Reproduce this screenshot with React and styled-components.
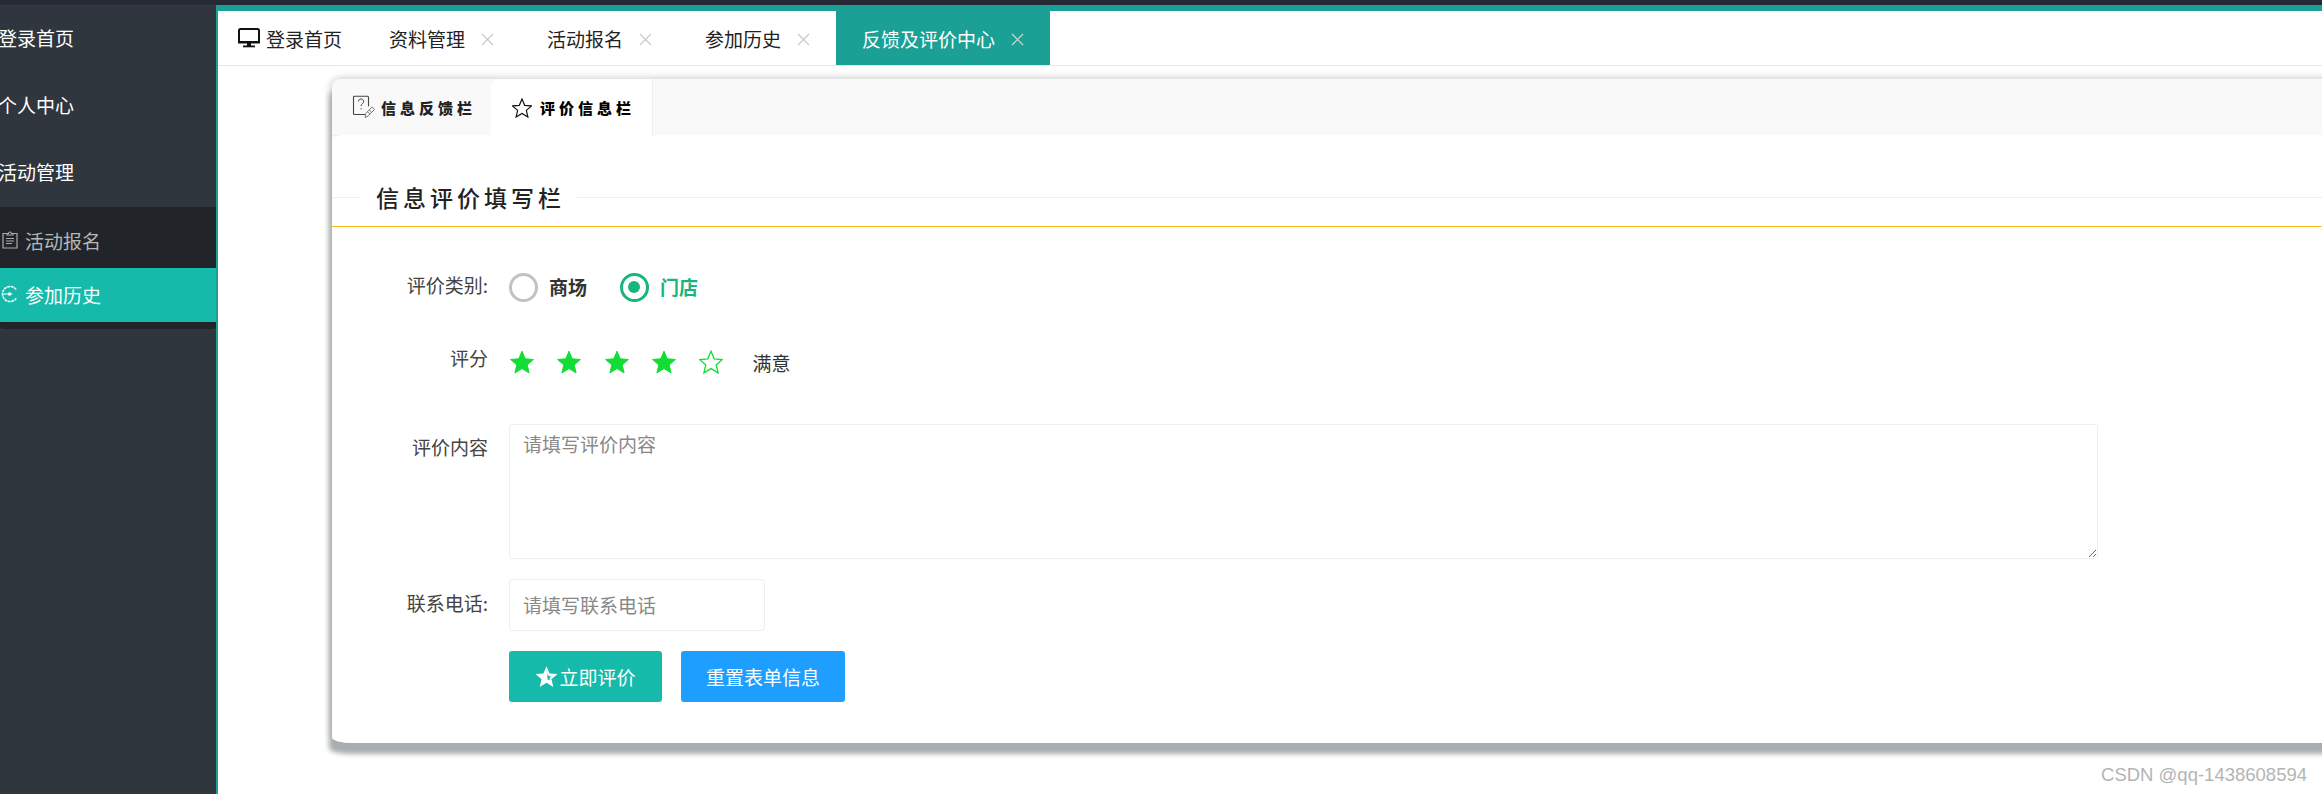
import React from "react";
import styled, { createGlobalStyle } from "styled-components";

const GlobalStyle = createGlobalStyle`
  html, body {
    margin: 0;
    padding: 0;
    height: 100%;
    overflow: hidden;
    background: #fff;
  }
  body {
    font-family: "Noto Sans CJK SC", "Liberation Sans", sans-serif;
    font-size: 19px;
    color: #333;
  }
  * {
    box-sizing: border-box;
  }
`;

const DesktopIcon = () => (
  <svg width="22" height="20" viewBox="0 0 22 20">
    <rect x="1" y="1" width="20" height="13" rx="1.5" fill="none" stroke="#111" strokeWidth="2" />
    <rect x="0" y="13" width="22" height="2.5" fill="#111" />
    <rect x="9" y="15" width="4" height="3" fill="#111" />
    <rect x="5" y="17.5" width="12" height="1.8" fill="#111" />
  </svg>
);

const ClipboardIcon = () => (
  <svg width="16" height="18" viewBox="0 0 16 18">
    <path d="M5 2.5H1v14.5h14V2.5h-4" fill="none" stroke="#a8abad" strokeWidth="1.2" />
    <path d="M5 4V2.5h1.5a1.5 1.5 0 0 1 3 0H11V4z" fill="none" stroke="#a8abad" strokeWidth="1.1" />
    <path d="M4 7.5h8M4 10h8M4 12.5h6" stroke="#a8abad" strokeWidth="1.1" />
  </svg>
);

const HistoryIcon = () => (
  <svg width="19" height="20" viewBox="0 0 19 20">
    <path d="M16 5.2A8 8 0 1 0 16 14.8" fill="none" stroke="#fff" strokeWidth="1.6" strokeDasharray="3 .7" />
    <circle cx="9" cy="10" r="1.8" fill="#fff" />
    <path d="M1.5 10H9M9 10h3" stroke="#fff" strokeWidth="1.2" />
  </svg>
);

const FeedbackIcon = () => (
  <svg width="23" height="24" viewBox="0 0 23 24">
    <path d="M13 19.5H2.5a1 1 0 0 1-1-1V2.2a1 1 0 0 1 1-1h13a1 1 0 0 1 1 1v9" fill="none" stroke="#444" strokeWidth="1.1" />
    <path d="M6.5 6.5a2.6 2.6 0 1 1 4 2.2c-.9.6-1.4 1.2-1.4 2.4M9.1 13.2v1.2" fill="none" stroke="#444" strokeWidth="1" />
    <path d="M13 22.5l.8-4 6.3-6.5 2.4 2.4-6.4 6.6zM15.3 16.6l2.6 2.5M17.2 14.8l2.4 2.4" fill="none" stroke="#777" strokeWidth="1" />
  </svg>
);

const StarShape = ({ size, fill, stroke, strokeWidth = 1 }) => (
  <svg width={size} height={size} viewBox="0 0 24 24">
    <path
      d="M12 1.2l3.2 7.6 8.2.7-6.2 5.4 1.9 8L12 18.6l-7.1 4.3 1.9-8L.6 9.5l8.2-.7z"
      fill={fill}
      stroke={stroke}
      strokeWidth={strokeWidth}
      strokeLinejoin="miter"
    />
  </svg>
);

const ButtonStar = () => (
  <svg width="23" height="23" viewBox="0 0 24 24">
    <path d="M12 1.2l3.2 7.6 8.2.7-6.2 5.4 1.9 8L12 18.6l-7.1 4.3 1.9-8L.6 9.5l8.2-.7z" fill="#fff" />
    <path d="M13 8.5l1.4 3 2.6.3-2 1.8.6 2.7-2.6-1.4z" fill="#16baaa" />
  </svg>
);

const openTabs = [
  { label: "资料管理" },
  { label: "活动报名" },
  { label: "参加历史" },
  { label: "反馈及评价中心", active: true },
];

const Page = styled.div`
  display: flex;
  flex-direction: column;
  height: 100vh;
  overflow: hidden;
`;

const TopStrip = styled.div`
  flex: none;
  height: 5px;
  background: #252a35;
`;

const Body = styled.div`
  flex: 1;
  display: flex;
  min-height: 0;
`;

const Sidebar = styled.aside`
  flex: none;
  width: 216px;
  background: #2f363e;
`;

const NavItem = styled.div`
  display: flex;
  align-items: center;
  height: 67px;
  padding-bottom: 2px;
  color: #fff;
  span {
    margin-left: -2px;
  }
`;

const SubMenu = styled.div`
  margin-top: 1px;
  padding: 7px 0;
  background: #212529;
  border-radius: 0 0 4px 4px;
`;

const SubItem = styled.div`
  display: flex;
  align-items: center;
  gap: 6px;
  height: 54px;
  padding-left: 1px;
  padding-bottom: 2px;
  color: ${({ $active }) => ($active ? "#fff" : "#b4b7b9")};
  background: ${({ $active }) => ($active ? "#16baaa" : "transparent")};
`;

const SubIcon = styled.span`
  display: flex;
  justify-content: center;
  width: 18px;
`;

const Main = styled.main`
  flex: 1;
  min-width: 0;
  display: flex;
  flex-direction: column;
  border-left: 2px solid #1aa094;
  border-top: 6px solid #1aa094;
`;

const TabBar = styled.div`
  flex: none;
  display: flex;
  height: 55px;
  border-bottom: 1px solid #e6e6e6;
`;

const HomeTab = styled.div`
  display: flex;
  align-items: center;
  gap: 6px;
  width: 145px;
  padding-left: 20px;
  color: #222;
`;

const Tab = styled.div`
  display: flex;
  align-items: center;
  gap: 16px;
  width: 158px;
  height: 54px;
  padding-left: 26px;
  color: ${({ $active }) => ($active ? "#fff" : "#222")};
  background: ${({ $active }) => ($active ? "#1aa094" : "transparent")};
  ${({ $active }) => $active && "width: 214px; margin-left: -1px;"}
`;

const CloseMark = styled.svg`
  width: 13px;
  height: 13px;
  margin-top: 3px;
  stroke: ${({ $active }) => ($active ? "#c9dcd9" : "#c9c9c9")};
`;

const Content = styled.div`
  flex: 1;
  min-height: 0;
  padding: 13px 0 0 114px;
`;

const Card = styled.section`
  margin-right: -40px;
  background: #f9f9f9;
  border-radius: 8px 8px 8px 20px / 8px 8px 8px 6px;
  box-shadow: -3px 11px 5px 0 #a9adaf, 0 0 8px rgba(0, 0, 0, 0.25);
`;

const CardTabs = styled.div`
  display: flex;
  height: 57px;
  border-bottom: 1px solid #eee;
`;

const CardTab = styled.div`
  display: flex;
  align-items: center;
  gap: ${({ $active }) => ($active ? "8px" : "6px")};
  height: ${({ $active }) => ($active ? "57px" : "56px")};
  width: ${({ $active }) => ($active ? "162px" : "159px")};
  padding-left: ${({ $active }) => ($active ? "21px" : "20px")};
  background: ${({ $active }) => ($active ? "#fff" : "transparent")};
  border-right: ${({ $active }) => ($active ? "1px solid #eee" : "none")};
  border-radius: 8px 0 0 0;
  font-size: 15px;
  font-weight: 900;
  letter-spacing: 4px;
  color: ${({ $active }) => ($active ? "#000" : "#222")};
`;

const CardBody = styled.div`
  padding: 40px 0 41px;
  background: #fff;
  border-radius: 10px 0 0 0;
  border-bottom-left-radius: 20px 6px;
  margin-top: -1px;
`;

const Legend = styled.div`
  display: flex;
  align-items: center;
  height: 44px;
`;

const LegendRule = styled.div`
  height: 1px;
  background: #eee;
  width: ${({ $short }) => ($short ? "28px" : "auto")};
  flex: ${({ $short }) => ($short ? "none" : "1")};
`;

const LegendTitle = styled.h2`
  margin: 0;
  padding: 0 12px 0 16px;
  font-size: 23px;
  font-weight: 500;
  letter-spacing: 4px;
  color: #222;
`;

const GoldRule = styled.div`
  height: 1px;
  margin-top: 7px;
  background: #f9bd1c;
`;

const Row = styled.div`
  display: flex;
  align-items: flex-start;
  gap: 21px;
  margin-top: ${({ $top }) => $top}px;
`;

const Label = styled.label`
  flex: none;
  width: 156px;
  margin-top: ${({ $shift }) => $shift}px;
  line-height: 28px;
  text-align: right;
  color: #444;
`;

const Choices = styled.div`
  display: flex;
  align-items: center;
  height: 28px;
`;

const Choice = styled.div`
  display: flex;
  align-items: center;
  gap: 11px;
  margin-right: 33px;
  font-weight: 700;
  line-height: 28px;
  color: ${({ $checked }) => ($checked ? "#1ab57f" : "#333")};
`;

const RadioMark = styled.span`
  position: relative;
  flex: none;
  width: 29px;
  height: 29px;
  border-radius: 50%;
  border: 3.5px solid ${({ $checked }) => ($checked ? "#16b777" : "#c2c2c2")};
  &::after {
    content: "";
    display: ${({ $checked }) => ($checked ? "block" : "none")};
    position: absolute;
    left: 5px;
    top: 5px;
    width: 12px;
    height: 12px;
    border-radius: 50%;
    background: #16b777;
  }
`;

const Stars = styled.div`
  display: flex;
  align-items: center;
  height: 24px;
  margin-left: 1px;
  gap: 23.3px;
`;

const RatingText = styled.span`
  margin-left: 6px;
  color: #333;
`;

const TextArea = styled.textarea`
  display: block;
  width: 1589px;
  height: 135px;
  padding: 5px 13px;
  border: 1px solid #eee;
  border-radius: 3px;
  outline: none;
  resize: vertical;
  font: inherit;
  line-height: 28px;
  color: #333;
  &::placeholder {
    color: #888;
  }
`;

const TextInput = styled.input`
  display: block;
  width: 256px;
  height: 52px;
  padding: 0 13px 2px;
  border: 1px solid #eee;
  border-radius: 3px;
  outline: none;
  font: inherit;
  &::placeholder {
    color: #888;
  }
`;

const Buttons = styled.div`
  display: flex;
  gap: 19px;
  margin-left: 177px;
  margin-top: 20px;
`;

const Button = styled.button`
  display: flex;
  align-items: center;
  justify-content: center;
  gap: 1px;
  width: ${({ $wide }) => ($wide ? "164px" : "153px")};
  height: 51px;
  padding: 0;
  border: none;
  border-radius: 3px;
  font: inherit;
  color: #fff;
  background: ${({ $blue }) => ($blue ? "#1e9fff" : "#16baaa")};
`;

const Watermark = styled.div`
  position: absolute;
  right: 15px;
  top: 765px;
  font-family: "Liberation Sans", sans-serif;
  font-size: 18.5px;
  line-height: 20px;
  color: #b4b4b4;
`;

export default function App() {
  return (
    <Page>
      <GlobalStyle />
      <TopStrip />
      <Body>
        <Sidebar>
          <NavItem><span>登录首页</span></NavItem>
          <NavItem><span>个人中心</span></NavItem>
          <NavItem><span>活动管理</span></NavItem>
          <SubMenu>
            <SubItem>
              <SubIcon><ClipboardIcon /></SubIcon>
              活动报名
            </SubItem>
            <SubItem $active>
              <SubIcon><HistoryIcon /></SubIcon>
              参加历史
            </SubItem>
          </SubMenu>
        </Sidebar>
        <Main>
          <TabBar>
            <HomeTab>
              <DesktopIcon />
              登录首页
            </HomeTab>
            {openTabs.map((tab) => (
              <Tab key={tab.label} $active={tab.active}>
                {tab.label}
                <CloseMark $active={tab.active} viewBox="0 0 13 13">
                  <path d="M1 1l11 11M12 1L1 12" strokeWidth="1.2" />
                </CloseMark>
              </Tab>
            ))}
          </TabBar>
          <Content>
            <Card>
              <CardTabs>
                <CardTab>
                  <FeedbackIcon />
                  信息反馈栏
                </CardTab>
                <CardTab $active>
                  <StarShape size={20} fill="none" stroke="#111" strokeWidth={1.4} />
                  评价信息栏
                </CardTab>
              </CardTabs>
              <CardBody>
                <Legend>
                  <LegendRule $short />
                  <LegendTitle>信息评价填写栏</LegendTitle>
                  <LegendRule />
                </Legend>
                <GoldRule />
                <Row $top={46}>
                  <Label $shift={-2}>评价类别:</Label>
                  <Choices>
                    <Choice>
                      <RadioMark />
                      商场
                    </Choice>
                    <Choice $checked>
                      <RadioMark $checked />
                      门店
                    </Choice>
                  </Choices>
                </Row>
                <Row $top={49}>
                  <Label $shift={-6}>评分</Label>
                  <Stars>
                    {[0, 1, 2, 3].map((i) => (
                      <StarShape key={i} size={24} fill="#12dd35" stroke="#12dd35" />
                    ))}
                    <StarShape size={24} fill="none" stroke="#12dd35" strokeWidth={1.3} />
                    <RatingText>满意</RatingText>
                  </Stars>
                </Row>
                <Row $top={50}>
                  <Label $shift={9}>评价内容</Label>
                  <TextArea placeholder="请填写评价内容" />
                </Row>
                <Row $top={20}>
                  <Label $shift={10}>联系电话:</Label>
                  <TextInput placeholder="请填写联系电话" />
                </Row>
                <Buttons>
                  <Button>
                    <ButtonStar />
                    立即评价
                  </Button>
                  <Button $blue $wide>重置表单信息</Button>
                </Buttons>
              </CardBody>
            </Card>
          </Content>
        </Main>
      </Body>
      <Watermark>CSDN @qq-1438608594</Watermark>
    </Page>
  );
}
